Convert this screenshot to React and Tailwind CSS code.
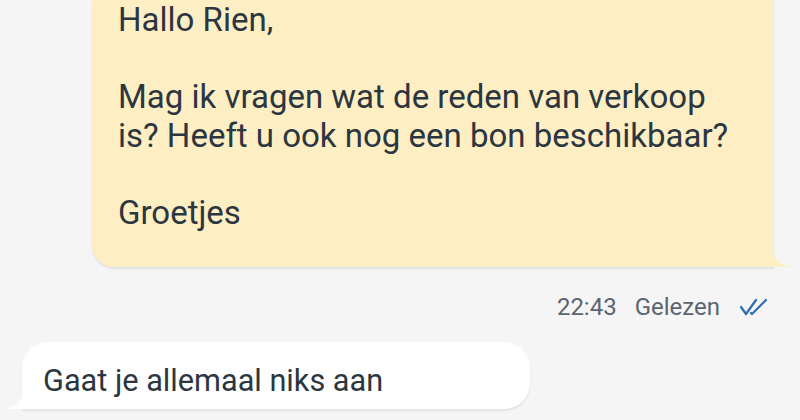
export default function App() {
  return (
    <div className="w-[800px] h-[420px] overflow-hidden bg-[#f5f5f5] font-['Roboto',sans-serif] text-[#2c3640]">
      {/* outgoing message */}
      <div className="flex justify-end pr-[26px]">
        <div className="relative w-[682px] bg-[#fdefc3] rounded-bl-[22px] pl-[26px] pt-[1px] pb-[34px] text-[33px] leading-[38.6px] shadow-[0_2px_2px_rgba(0,0,0,0.08)]">
          <p>Hallo Rien,</p>
          <p>&nbsp;</p>
          <p>Mag ik vragen wat de reden van verkoop</p>
          <p>is? Heeft u ook nog een bon beschikbaar?</p>
          <p>&nbsp;</p>
          <p>Groetjes</p>
          <svg className="absolute right-[-18px] bottom-0" width="20" height="24" viewBox="0 0 20 24">
            <path d="M0 0 C0 14 6 22 20 24 L0 24 Z" fill="#fdefc3" />
          </svg>
        </div>
      </div>

      {/* status */}
      <div className="flex justify-end items-center pr-[33px] mt-[26px] h-[28px] text-[24px] text-[#5b6570]">
        <span>22:43</span>
        <span className="ml-[18px]">Gelezen</span>
        <svg className="ml-[20px]" width="27" height="18" viewBox="0 0 27 18" fill="none" stroke="#2f6db5" strokeWidth="2.2" strokeLinecap="round" strokeLinejoin="round">
          <path d="M1 9 L6 16 L16 2" />
          <path d="M11 15 L12 16 L26 2" />
        </svg>
      </div>

      {/* incoming message */}
      <div className="flex pl-[22px] mt-[21px]">
        <div className="relative bg-white rounded-[26px] rounded-bl-none pl-[21px] pr-[147px] h-[67px] pt-[24px] text-[30.7px] leading-[30px] shadow-[0_2px_2px_rgba(0,0,0,0.08)]">
          <span>Gaat je allemaal niks aan</span>
          <svg className="absolute left-[-17px] bottom-0" width="20" height="26" viewBox="0 0 20 26">
            <path d="M20 0 C20 14 14 23 0 26 L20 26 Z" fill="#ffffff" />
          </svg>
        </div>
      </div>
    </div>
  );
}
